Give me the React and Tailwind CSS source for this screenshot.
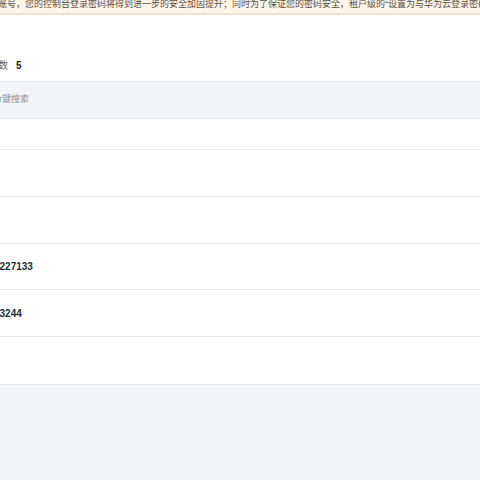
import React from "react";

const rows = [
  { h: "h-[31px]", text: "" },
  { h: "h-[47px]", text: "" },
  { h: "h-[47px]", text: "" },
  { h: "h-[46px]", text: "0227133" },
  { h: "h-[47px]", text: "83244" },
  { h: "h-[48px]", text: "" },
];

export default function App() {
  return (
    <div
      className="w-[480px] h-[480px] overflow-hidden bg-[#f1f4f8] flex flex-col"
      style={{ fontFamily: '"Liberation Sans", "Noto Sans CJK SC", sans-serif' }}
    >
      {/* notice banner */}
      <div className="h-[15px] shrink-0 bg-[#fdf5ea] border-b-2 border-[#f6e2cb] overflow-hidden">
        <div className="whitespace-nowrap text-[9px] leading-[10px] text-[#5a4e44] -mt-[1px] -ml-[2px]">
          账号，您的控制台登录密码将得到进一步的安全加固提升；同时为了保证您的密码安全，租户级的“设置为与华为云登录密码保持一致”
        </div>
      </div>

      <div className="bg-white flex flex-col">
        {/* total */}
        <div className="h-[66px] flex items-end pb-[8px]">
          <div className="flex items-center gap-[8px] -ml-[2px] text-[10px]">
            <span className="text-[#666]">数</span>
            <span className="font-bold text-[#1f2329]">5</span>
          </div>
        </div>

        {/* search bar */}
        <div className="h-[38px] bg-[#f2f5f8] border-y border-[#e4e8ee] flex items-center">
          <span className="whitespace-nowrap text-[9px] text-[#8a8f99] -ml-[1px]">r键搜索</span>
        </div>

        {/* table rows */}
        {rows.map((r, i) => (
          <div
            key={i}
            className={`${r.h} border-b border-[#e6e7ea] flex items-center`}
          >
            {r.text && (
              <span className="text-[10px] font-bold text-[#252b3a] -ml-[6px] whitespace-nowrap">
                {r.text}
              </span>
            )}
          </div>
        ))}
      </div>
      <div className="h-[2px] bg-[#f6f8fa] shrink-0" />
    </div>
  );
}
